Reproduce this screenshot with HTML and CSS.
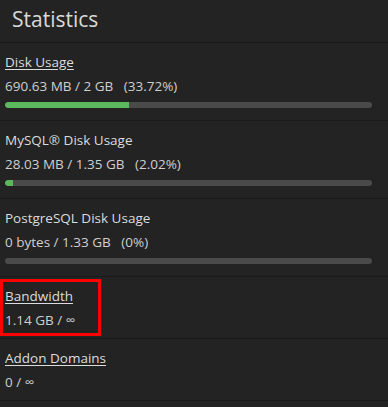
FILE: index.html
```html
<!DOCTYPE html>
<html>
<head>
<meta charset="utf-8">
<link rel="stylesheet" href="styles.css">
</head>
<body>
<div class="panel">
  <div class="header">Statistics</div>
  <div class="row">
    <a class="title link">Disk Usage</a>
    <div class="value">690.63 MB / 2 GB <span class="pct">(33.72%)</span></div>
    <div class="bar"><div class="fill" style="width:33.72%"></div></div>
  </div>
  <div class="row">
    <div class="title">MySQL® Disk Usage</div>
    <div class="value">28.03 MB / 1.35 GB <span class="pct">(2.02%)</span></div>
    <div class="bar"><div class="fill" style="width:2.2%"></div></div>
  </div>
  <div class="row">
    <div class="title">PostgreSQL Disk Usage</div>
    <div class="value">0 bytes / 1.33 GB <span class="pct">(0%)</span></div>
    <div class="bar"><div class="fill" style="width:0%"></div></div>
  </div>
  <div class="row">
    <div class="highlight">
      <a class="title link">Bandwidth</a>
      <div class="value">1.14 GB / ∞</div>
    </div>
  </div>
  <div class="row">
    <a class="title link">Addon Domains</a>
    <div class="value">0 / ∞</div>
  </div>
</div>
</body>
</html>
```
FILE: styles.css
```css
html, body {
  margin: 0;
  padding: 0;
  background: #232323;
}
body {
  font-family: "Open Sans", "Liberation Sans", sans-serif;
  color: #d6d6d6;
  font-size: 13.5px;
}
.panel {
  width: 388px;
  background: #232323;
}
.header {
  height: 43px;
  box-sizing: border-box;
  padding: 2px 0 0 12px;
  font-size: 21px;
  line-height: 34px;
  color: #d9d9d9;
  border-bottom: 1px solid #1a1a1a;
}
.row {
  padding: 7px 16px 6px 5px;
  border-bottom: 1px solid #1a1a1a;
}
.title {
  display: block;
  line-height: 24px;
  color: #dcdcdc;
}
.link {
  text-decoration: underline;
  text-underline-offset: 2px;
}
.value {
  line-height: 24px;
  color: #cfcfcf;
}
.pct {
  margin-left: 7px;
}
.bar {
  height: 6px;
  margin: 4px 0 6px;
  background: #4a4a4a;
  border-radius: 3px;
  overflow: hidden;
}
.fill {
  height: 100%;
  background: #5cb85c;
  border-radius: 3px 0 0 3px;
}
.highlight {
  margin: -5px 0 -4px -5px;
  padding: 2px 0 1px 2px;
  width: 93px;
  border: 3px solid #ff0000;
}
```
